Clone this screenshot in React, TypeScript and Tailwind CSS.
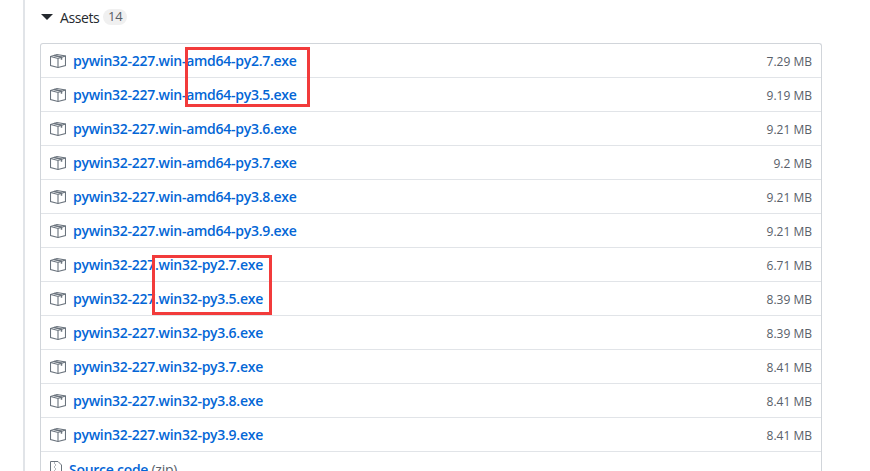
const assets = [
  ["pywin32-227.win-amd64-py2.7.exe", "7.29 MB"],
  ["pywin32-227.win-amd64-py3.5.exe", "9.19 MB"],
  ["pywin32-227.win-amd64-py3.6.exe", "9.21 MB"],
  ["pywin32-227.win-amd64-py3.7.exe", "9.2 MB"],
  ["pywin32-227.win-amd64-py3.8.exe", "9.21 MB"],
  ["pywin32-227.win-amd64-py3.9.exe", "9.21 MB"],
  ["pywin32-227.win32-py2.7.exe", "6.71 MB"],
  ["pywin32-227.win32-py3.5.exe", "8.39 MB"],
  ["pywin32-227.win32-py3.6.exe", "8.39 MB"],
  ["pywin32-227.win32-py3.7.exe", "8.41 MB"],
  ["pywin32-227.win32-py3.8.exe", "8.41 MB"],
  ["pywin32-227.win32-py3.9.exe", "8.41 MB"],
];

function PackageIcon() {
  return (
    <svg width="16" height="16" viewBox="0 0 16 16" fill="none" stroke="#6a737d" strokeWidth="1.1" className="shrink-0">
      <path d="M.5 3.5 7 1.5l8.5 1.5v9.5l-7.5 2-7.5-2z" />
      <path d="M.5 3.5 8 5.5l7.5-2.5M8 5.5v9" />
      <path d="M4 2.5l7.5 1.7v2.6" strokeWidth="1.5" />
    </svg>
  );
}

function ZipIcon() {
  return (
    <svg width="12" height="16" viewBox="0 0 12 16" fill="none" stroke="#6a737d" strokeWidth="1" className="shrink-0">
      <path d="M.5.5h7.5l3.5 3.5v11.5H.5z" />
      <path d="M4 2h1M5 4h1M4 6h1M5 8h1M4 10h1" />
    </svg>
  );
}

export default function App() {
  return (
    <div className="relative h-[471px] w-[870px] overflow-hidden bg-white font-['Open_Sans',sans-serif]">
      <div className="ml-[23px] h-full w-[808px] border-l-2 border-[#e1e4e8] pl-[15px] pt-[5px]">
        <div className="flex h-[24px] items-center">
          <svg width="12" height="6" viewBox="0 0 12 6" className="ml-[1px] mr-[7px]">
            <path d="M0 0h12L6 6z" fill="#24292e" />
          </svg>
          <span className="text-[14px] tracking-[-0.4px] text-[#24292e]">Assets</span>
          <span className="ml-[4px] flex h-[16px] w-[24px] items-center justify-center rounded-full bg-[#f0f0f0] text-[13px] text-[#586069]">14</span>
        </div>
        <div className="mt-[14px] w-[782px] rounded-t-[3px] border border-b-0 border-[#d1d5da]">
          {assets.map(([name, size]) => (
            <div key={name} className="flex h-[34px] items-center border-b border-[#e1e4e8] px-[9px]">
              <PackageIcon />
              <a className="ml-[7px] text-[14px] font-[550] tracking-[-0.27px] text-[#0366d6]">{name}</a>
              <span className="ml-auto mt-[2px] text-[12px] text-[#586069]">{size}</span>
            </div>
          ))}
          <div className="flex h-[34px] items-center pl-[9px]">
            <ZipIcon />
            <a className="ml-[7px] text-[14px] font-[550] tracking-[-0.27px] text-[#0366d6]">
              Source code <span className="font-normal text-[#586069]">(zip)</span>
            </a>
          </div>
        </div>
      </div>
      <div className="absolute left-[185px] top-[47px] h-[60px] w-[125px] border-[3px] border-[#f23b3b]" />
      <div className="absolute left-[152px] top-[255px] h-[60px] w-[120px] border-[3px] border-[#f23b3b]" />
    </div>
  );
}
